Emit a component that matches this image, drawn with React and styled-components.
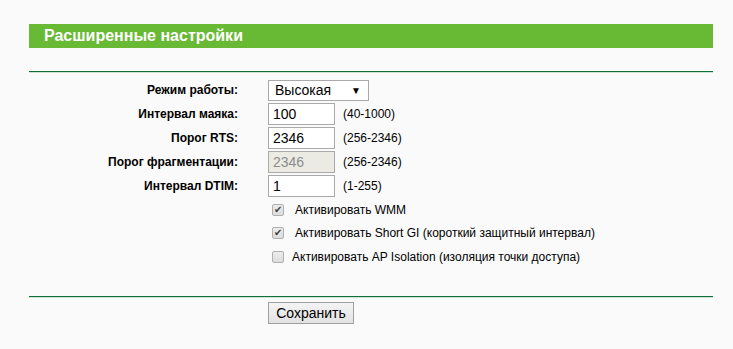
import React from 'react'
import styled, { createGlobalStyle } from 'styled-components'

const GlobalStyle = createGlobalStyle`
  html, body {
    margin: 0;
    padding: 0;
    background: #fafafa;
    font-family: "Liberation Sans", Arial, sans-serif;
  }
`;

const Page = styled.div`
  width: 684px;
  margin-left: 29px;
  padding-top: 24px;
  height: 325px;
`;

const TitleBar = styled.div`
  height: 24px;
  background: #68b934;
  color: #fff;
  font-size: 16px;
  font-weight: bold;
  line-height: 24px;
  padding-left: 15px;
`;

const Rule = styled.div`
  height: 1px;
  background: #107038;
  border-bottom: 1px solid #cfe3d4;
  margin-top: ${p => p.top}px;
`;

const Form = styled.div`
  display: grid;
  grid-template-columns: 209px 1fr;
  column-gap: 30px;
  grid-auto-rows: 24px;
  margin-top: 5px;
  align-items: center;
`;

const Label = styled.div`
  text-align: right;
  font-size: 12px;
  font-weight: bold;
  color: #000;
`;

const Field = styled.div`
  display: flex;
  align-items: center;
  gap: 8px;
`;

const SelectBox = styled.div`
  box-sizing: border-box;
  width: 101px;
  height: 21px;
  border: 1px solid #a9a9a9;
  background: #fff;
  display: flex;
  align-items: center;
  justify-content: space-between;
  padding: 0 7px 0 6px;
  font-size: 14px;
  color: #000;
  span:last-child {
    font-size: 10px;
  }
`;

const TextInput = styled.input`
  box-sizing: border-box;
  width: 67px;
  height: 22px;
  border: 1px solid #a9a9a9;
  padding: 0 4px;
  font-family: "Liberation Sans", Arial, sans-serif;
  font-size: 14px;
  color: #000;
  background: #fff;
  &:disabled {
    background: #ebebe4;
    color: #8c8c8c;
  }
`;

const Hint = styled.span`
  font-size: 12px;
  color: #000;
`;

const Options = styled.div`
  display: flex;
  flex-direction: column;
  margin: 0 0 0 243px;
`;

const CheckRow = styled.div`
  display: flex;
  align-items: center;
  height: 23.5px;
  font-size: 12px;
  color: #000;
`;

const Box = styled.span`
  box-sizing: border-box;
  width: 12px;
  height: 12px;
  margin-right: ${p => p.$gap}px;
  border: 1px solid #b0b0b0;
  border-radius: 2px;
  background: linear-gradient(#ececec, #dcdcdc);
  display: flex;
  align-items: center;
  justify-content: center;
  font-size: 10px;
  line-height: 1;
  color: #3c3c3c;
`;

const Actions = styled.div`
  padding: 4px 0 0 239px;
`;

const SaveButton = styled.button`
  width: 86px;
  height: 22px;
  border: 1px solid #a0a0a0;
  border-radius: 0;
  background: linear-gradient(#f4f4f4, #e2e2e2);
  font-family: "Liberation Sans", Arial, sans-serif;
  font-size: 14px;
  color: #000;
  padding: 0;
`;

const fields = [
  { label: 'Интервал маяка:', value: '100', hint: '(40-1000)' },
  { label: 'Порог RTS:', value: '2346', hint: '(256-2346)' },
  { label: 'Порог фрагментации:', value: '2346', hint: '(256-2346)', disabled: true },
  { label: 'Интервал DTIM:', value: '1', hint: '(1-255)' },
];

const options = [
  { text: 'Активировать WMM', checked: true, gap: 11 },
  { text: 'Активировать Short GI (короткий защитный интервал)', checked: true, gap: 11 },
  { text: 'Активировать AP Isolation (изоляция точки доступа)', checked: false, gap: 8 },
];

export default function App() {
  return (
    <Page>
      <GlobalStyle />
      <TitleBar>Расширенные настройки</TitleBar>
      <Rule top={23} />
      <Form>
        <Label>Режим работы:</Label>
        <Field>
          <SelectBox><span>Высокая</span><span>▼</span></SelectBox>
        </Field>
        {fields.map(f => (
          <React.Fragment key={f.label}>
            <Label>{f.label}</Label>
            <Field>
              <TextInput defaultValue={f.value} disabled={f.disabled} />
              <Hint>{f.hint}</Hint>
            </Field>
          </React.Fragment>
        ))}
      </Form>
      <Options>
        {options.map(o => (
          <CheckRow key={o.text}>
            <Box $gap={o.gap}>{o.checked ? '✔' : ''}</Box>
            {o.text}
          </CheckRow>
        ))}
      </Options>
      <Rule top={27} />
      <Actions>
        <SaveButton>Сохранить</SaveButton>
      </Actions>
    </Page>
  )
}
